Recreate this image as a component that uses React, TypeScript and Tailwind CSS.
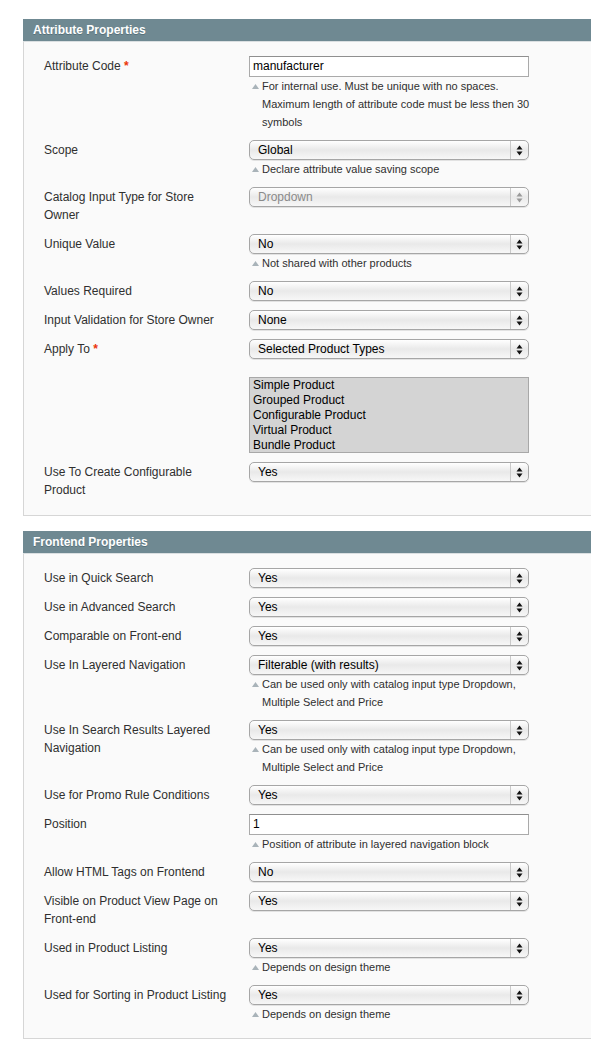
import React from 'react'

interface Field {
  label: string
  required?: boolean
  kind: 'text' | 'select'
  value: string
  disabled?: boolean
  hint?: string[]
  multi?: string[]
}

const ATTRIBUTE_FIELDS: Field[] = [
  {
    label: 'Attribute Code', required: true, kind: 'text', value: 'manufacturer',
    hint: ['For internal use. Must be unique with no spaces.', 'Maximum length of attribute code must be less then 30', 'symbols'],
  },
  { label: 'Scope', kind: 'select', value: 'Global', hint: ['Declare attribute value saving scope'] },
  { label: 'Catalog Input Type for Store Owner', kind: 'select', value: 'Dropdown', disabled: true },
  { label: 'Unique Value', kind: 'select', value: 'No', hint: ['Not shared with other products'] },
  { label: 'Values Required', kind: 'select', value: 'No' },
  { label: 'Input Validation for Store Owner', kind: 'select', value: 'None' },
  {
    label: 'Apply To', required: true, kind: 'select', value: 'Selected Product Types',
    multi: ['Simple Product', 'Grouped Product', 'Configurable Product', 'Virtual Product', 'Bundle Product'],
  },
  { label: 'Use To Create Configurable Product', kind: 'select', value: 'Yes' },
]

const LAYERED_HINT = ['Can be used only with catalog input type Dropdown,', 'Multiple Select and Price']

const FRONTEND_FIELDS: Field[] = [
  { label: 'Use in Quick Search', kind: 'select', value: 'Yes' },
  { label: 'Use in Advanced Search', kind: 'select', value: 'Yes' },
  { label: 'Comparable on Front-end', kind: 'select', value: 'Yes' },
  { label: 'Use In Layered Navigation', kind: 'select', value: 'Filterable (with results)', hint: LAYERED_HINT },
  { label: 'Use In Search Results Layered Navigation', kind: 'select', value: 'Yes', hint: LAYERED_HINT },
  { label: 'Use for Promo Rule Conditions', kind: 'select', value: 'Yes' },
  { label: 'Position', kind: 'text', value: '1', hint: ['Position of attribute in layered navigation block'] },
  { label: 'Allow HTML Tags on Frontend', kind: 'select', value: 'No' },
  { label: 'Visible on Product View Page on Front-end', kind: 'select', value: 'Yes' },
  { label: 'Used in Product Listing', kind: 'select', value: 'Yes', hint: ['Depends on design theme'] },
  { label: 'Used for Sorting in Product Listing', kind: 'select', value: 'Yes', hint: ['Depends on design theme'] },
]

function SelectBox({ value, disabled }: { value: string; disabled?: boolean }) {
  const arrow = disabled ? '#9a9a9a' : '#111111'
  return (
    <div className="flex h-[20px] w-[280px] items-stretch rounded-[5px] border border-[#a6a6a6] bg-gradient-to-b from-white via-[#e9e9e9] to-[#f7f7f7] shadow-[0_1px_0_0_#e2e2e2]">
      <div className={`flex-1 truncate pl-[8px] text-[12px] leading-[18px] ${disabled ? 'text-[#8a8a8a]' : 'text-black'}`}>
        {value}
      </div>
      <div className="flex w-[18px] items-center justify-center border-l border-[#c9c9c9]">
        <svg width="7" height="11" viewBox="0 0 7 11">
          <path d="M3.5 0.5 L6.5 4.5 L0.5 4.5 Z" fill={arrow} />
          <path d="M0.5 6.5 L6.5 6.5 L3.5 10.5 Z" fill={arrow} />
        </svg>
      </div>
    </div>
  )
}

function Hint({ lines }: { lines: string[] }) {
  return (
    <div className="relative pl-[13px] text-[11px] leading-[18px] text-[#2f2f2f]">
      <svg className="absolute left-[3px] top-[7px]" width="7" height="5" viewBox="0 0 7 5">
        <path d="M3.5 0 L7 5 L0 5 Z" fill="#a9b3b9" />
      </svg>
      {lines.map((l) => (
        <div key={l} className="whitespace-nowrap">{l}</div>
      ))}
    </div>
  )
}

function Row({ field }: { field: Field }) {
  return (
    <div className="flex pt-[4px] pb-[5px]">
      <div className="mt-[1px] pb-[1px] w-[205px] shrink-0 pr-[20px] text-[12px] leading-[18px] text-[#2f2f2f]">
        <span className="block w-[185px]">
          {field.label}
          {field.required && <span className="font-bold text-[#eb340a]"> *</span>}
        </span>
      </div>
      <div className="w-[280px]">
        {field.kind === 'text' ? (
          <div className="h-[21px] w-[280px] border border-[#aaaaaa] border-t-[#8f8f8f] bg-white pl-[3px] text-[12px] leading-[19px] text-black">
            {field.value}
          </div>
        ) : (
          <SelectBox value={field.value} disabled={field.disabled} />
        )}
        {field.multi && (
          <div className="mt-[18px] h-[76px] w-[280px] border border-[#a8a8a8] bg-[#d4d4d4] pl-[3px] text-[12px] leading-[15px] text-black">
            {field.multi.map((m) => (
              <div key={m}>{m}</div>
            ))}
          </div>
        )}
        {field.hint && <Hint lines={field.hint} />}
      </div>
    </div>
  )
}

function Panel({ title, fields }: { title: string; fields: Field[] }) {
  return (
    <div className="w-[600px]">
      <div className="h-[23px] border-b border-[#dadfe1] bg-[#6f8992] pl-[10px] text-[12px] font-bold leading-[22px] text-white [text-shadow:0_1px_0_#56707a]">
        {title}
      </div>
      <div className="border-b border-l border-[#d6d6d6] bg-[#fafafa] pl-[20px] pt-[10px] pb-[10px]">
        {fields.map((f) => (
          <Row key={f.label} field={f} />
        ))}
      </div>
    </div>
  )
}

export default function App() {
  return (
    <div className="h-[1060px] w-[591px] overflow-hidden bg-white font-['Liberation_Sans',Arial,sans-serif]">
      <div className="flex flex-col gap-[15px] pl-[23px] pt-[19px]">
        <Panel title="Attribute Properties" fields={ATTRIBUTE_FIELDS} />
        <Panel title="Frontend Properties" fields={FRONTEND_FIELDS} />
      </div>
    </div>
  )
}
